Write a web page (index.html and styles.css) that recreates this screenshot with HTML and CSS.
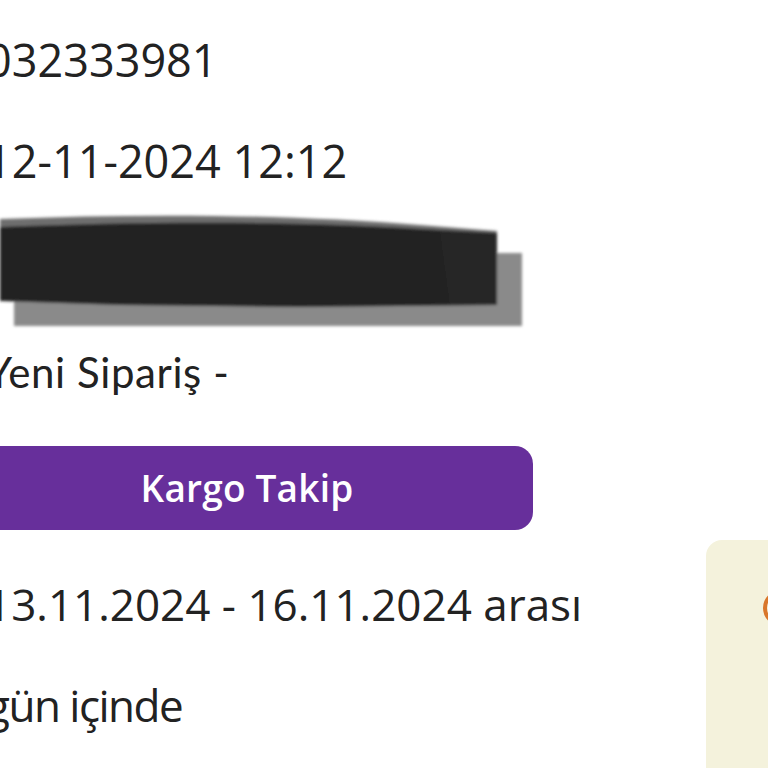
FILE: index.html
```html
<!DOCTYPE html>
<html lang="tr">
<head>
<meta charset="utf-8">
<link rel="stylesheet" href="styles.css">
</head>
<body>
<div class="page">
  <div class="main">
    <div class="row">032333981</div>
    <div class="row">12-11-2024 12:12</div>
    <div class="row redacted">
      <svg class="scribble" width="540" height="120" viewBox="0 0 540 120">
        <defs>
          <filter id="soft" x="-5%" y="-20%" width="110%" height="140%">
            <feGaussianBlur stdDeviation="1.4"/>
          </filter>
        </defs>
        <g filter="url(#soft)">
          <path d="M0 8 C150 2 300 4 420 14 L497 20 L497 32 L0 24 Z" fill="#6e6e6e"/>
          <path d="M14 42 L522 42 L522 115 L14 115 Z" fill="#8a8a8a"/>
          <path d="M0 16 C150 10 300 10 420 18 L497 22 L497 94 L300 96 L120 94 L0 90 Z" fill="#222222"/>
          <path d="M440 20 L497 24 L497 94 L450 94 Z" fill="#282828"/>
        </g>
      </svg>
    </div>
    <div class="row status">Yeni Sipariş -</div>
    <button class="track-btn" type="button">Kargo Takip</button>
    <div class="row small">13.11.2024 - 16.11.2024 arası</div>
    <div class="row small tight">gün içinde</div>
  </div>
  <aside class="side-card">
    <svg class="side-icon" width="40" height="40" viewBox="0 0 40 40">
      <circle cx="20" cy="20" r="16" fill="none" stroke="#d9772b" stroke-width="4"/>
    </svg>
  </aside>
</div>
</body>
</html>
```

FILE: styles.css
```css
html, body {
  margin: 0;
  padding: 0;
  overflow: hidden;
  background: #ffffff;
}

.page {
  display: flex;
  align-items: flex-start;
  width: 768px;
  height: 768px;
  overflow: hidden;
}

.main {
  flex: none;
  width: 720px;
  margin-left: -14px;
  padding-top: 9px;
  display: flex;
  flex-direction: column;
  font-family: "Open Sans", "Liberation Sans", sans-serif;
  color: #222222;
}

.row {
  height: 101px;
  line-height: 101px;
  font-size: 45px;
  white-space: nowrap;
}

.row.small {
  font-size: 44px;
}

.row.tight {
  letter-spacing: -1.5px;
}

.scribble {
  display: block;
  margin-left: 14px;
}

.status {
  font-family: "Lato", "Open Sans", sans-serif;
  font-size: 42px;
  letter-spacing: 0.6px;
  height: 134px;
  line-height: 120px;
}

.track-btn {
  display: block;
  margin-left: -25px;
  width: 572px;
  height: 84px;
  border: none;
  border-radius: 18px;
  background: #672f9b;
  color: #ffffff;
  font-family: "Open Sans", "Lato", sans-serif;
  font-weight: 600;
  font-size: 37px;
  letter-spacing: 0.2px;
  margin-bottom: 24px;
  padding: 0 0 2px 0;
}

.side-card {
  flex: none;
  width: 200px;
  height: 300px;
  margin-top: 540px;
  border-radius: 16px;
  background: #f4f2dc;
  padding: 48px 0 0 55px;
  box-sizing: border-box;
}

.side-icon {
  display: block;
}
```
